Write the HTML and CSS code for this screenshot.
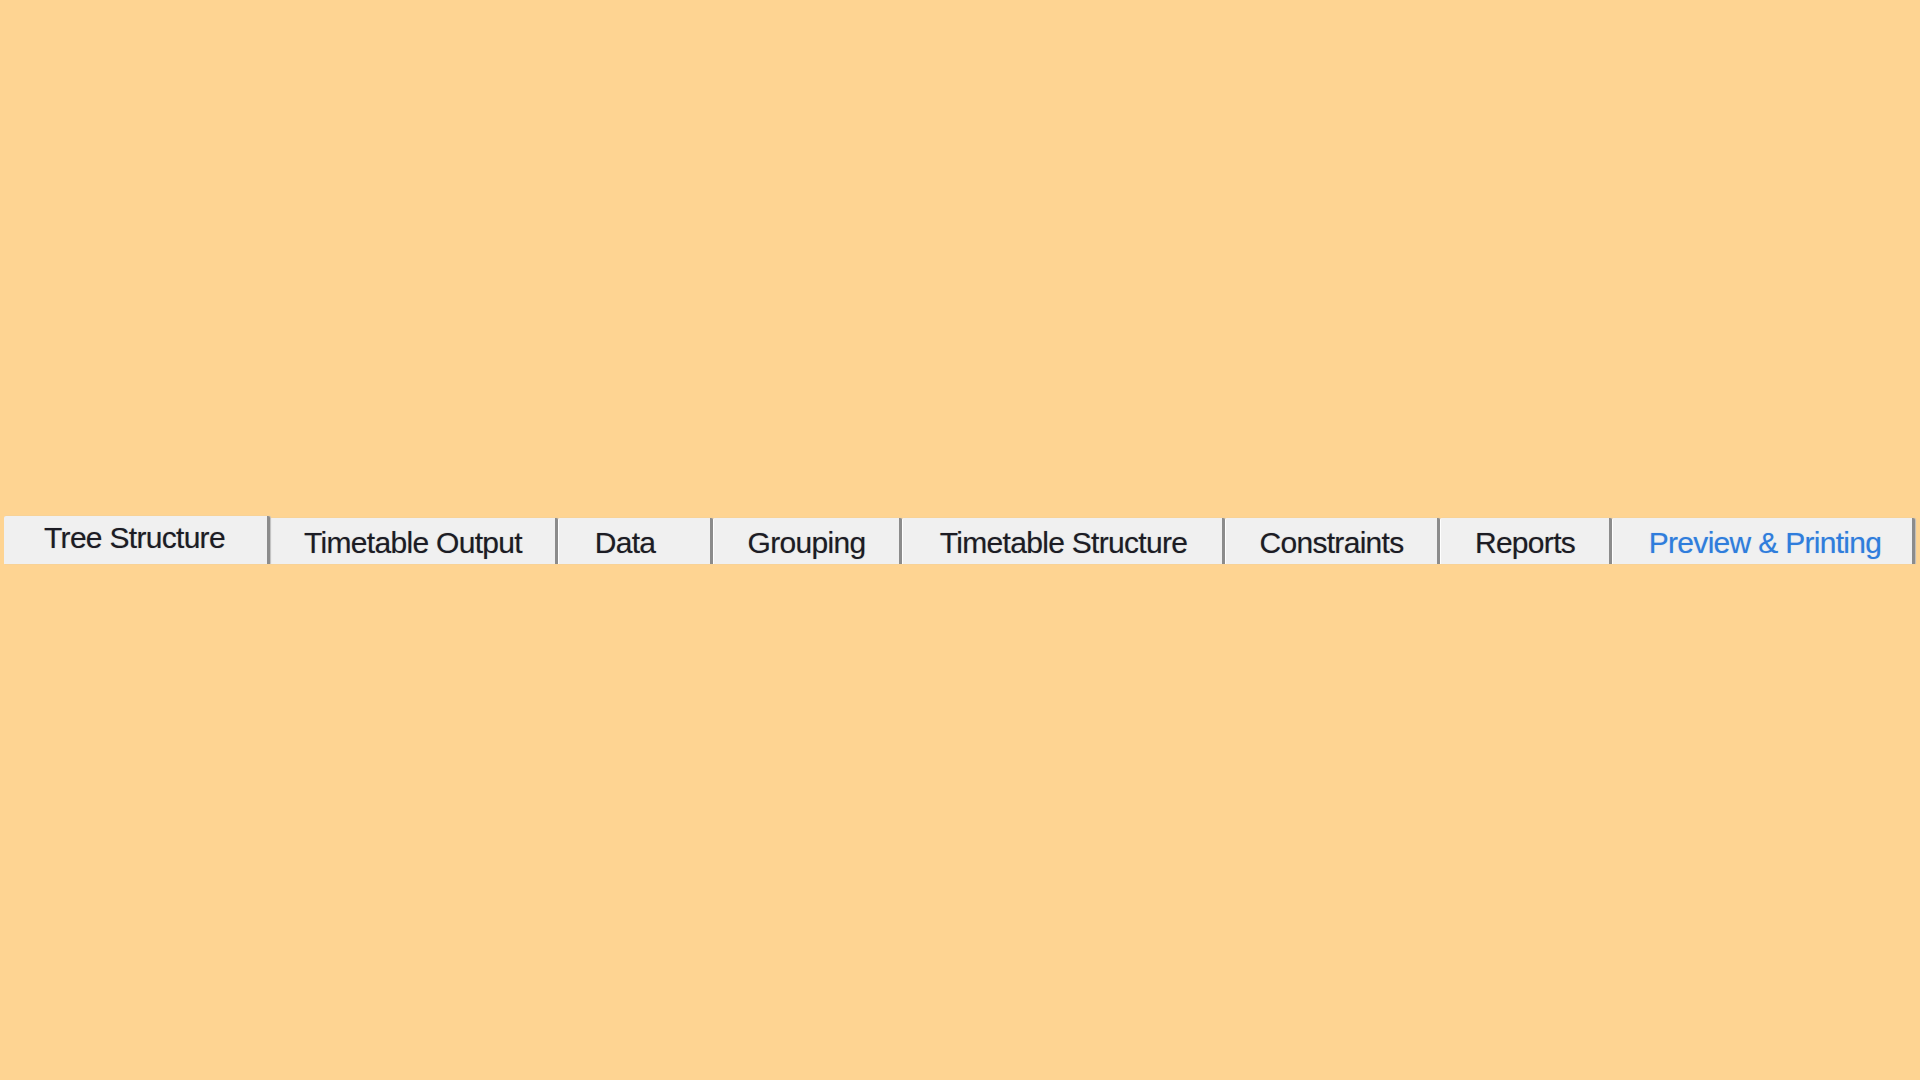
FILE: index.html
```html
<!DOCTYPE html>
<html lang="en">
<head>
<meta charset="utf-8">
<title>Tabs</title>
<link rel="stylesheet" href="styles.css">
</head>
<body>
<div class="page">
  <div class="tabstrip">
    <div class="tab tab-1 selected">Tree Structure</div>
    <div class="tab tab-2">Timetable Output</div>
    <div class="tab tab-3">Data</div>
    <div class="tab tab-4">Grouping</div>
    <div class="tab tab-5">Timetable Structure</div>
    <div class="tab tab-6">Constraints</div>
    <div class="tab tab-7">Reports</div>
    <div class="tab tab-8 hot">Preview &amp; Printing</div>
  </div>
</div>
</body>
</html>
```

FILE: styles.css
```css
html, body {
  margin: 0;
  padding: 0;
  background: #fed492;
}

.page {
  width: 1920px;
  height: 1080px;
  box-sizing: border-box;
  padding: 516px 0 0 4px;
}

.tabstrip {
  display: flex;
  align-items: flex-end;
  height: 48px;
}

.tab {
  box-sizing: border-box;
  height: 46px;
  padding-top: 3px;
  line-height: 43px;
  background: #f0f0f0;
  border-left: 1px solid #ffffff;
  border-right: 3px solid #8c8c8c;
  box-shadow: 1px 0 1px #bdbdbd;
  border-top-left-radius: 2px;
  border-top-right-radius: 2px;
  text-align: center;
  font-family: "Liberation Sans", Arial, sans-serif;
  font-size: 30px;
  letter-spacing: -0.7px;
  color: #1c1c24;
  white-space: nowrap;
  text-shadow: 0 0 1px rgba(40, 40, 60, 0.4);
}

.tab.selected {
  height: 48px;
  padding-top: 0;
  padding-bottom: 4px;
  line-height: 44px;
  border-left: none;
  position: relative;
  z-index: 1;
}

.tab.hot {
  color: #2f7ddc;
  text-shadow: 0 0 1px rgba(47, 125, 220, 0.4);
}

.tab-1 { width: 266px; padding-right: 2px; }
.tab-2 { width: 288px; }
.tab-3 { width: 155px; padding-right: 19px; }
.tab-4 { width: 189px; }
.tab-5 { width: 323px; padding-left: 2px; }
.tab-6 { width: 215px; }
.tab-7 { width: 172px; }
.tab-8 { width: 303px; padding-left: 5px; }
```
